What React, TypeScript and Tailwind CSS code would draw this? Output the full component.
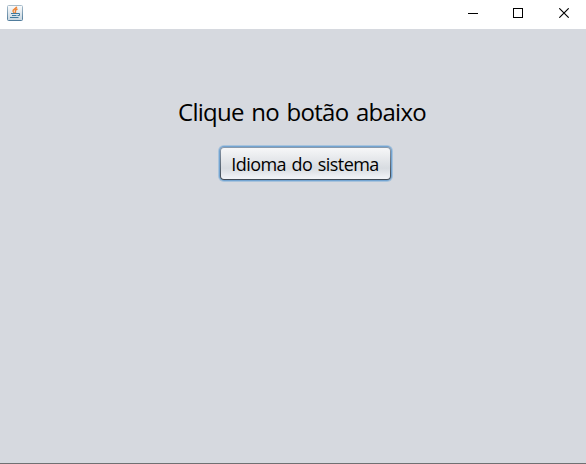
function JavaIcon() {
  return (
    <svg width="16" height="16" viewBox="0 0 16 16" className="block">
      <defs>
        <linearGradient id="tile" x1="0" y1="0" x2="0" y2="1">
          <stop offset="0" stopColor="#fbfcfd" />
          <stop offset="1" stopColor="#c9d6e0" />
        </linearGradient>
        <linearGradient id="edge" x1="0" y1="0" x2="0" y2="1">
          <stop offset="0" stopColor="#a9bdcb" />
          <stop offset="1" stopColor="#507c9c" />
        </linearGradient>
      </defs>
      <rect x="0.5" y="0.5" width="15" height="15" rx="1" fill="url(#tile)" stroke="url(#edge)" />
      <path d="M9.7 1.8C9.2 3.6 5.6 4.4 6 6.2C6.2 7 7 7.3 7 8M10.5 4C8.5 4.8 8 5.6 8.5 6.5C8.8 7.2 8.6 7.6 8 8" fill="none" stroke="#ee8435" strokeWidth="1.4" />
      <path d="M4 8.5H10M5 10.5H9.5M10 8.5H12.5V10.5H10.5M3 12.5H11.5" fill="none" stroke="#3f789e" strokeWidth="1" />
    </svg>
  );
}

function TitleBar() {
  return (
    <header className="flex h-[29px] shrink-0 items-start justify-between bg-white">
      <div className="pt-[5px] pl-[7px]">
        <JavaIcon />
      </div>
      <div className="flex">
        <button aria-label="Minimizar" className="flex h-[26px] w-[45px] items-center justify-center">
          <svg width="11" height="10" shapeRendering="crispEdges">
            <rect x="0" y="5" width="10" height="1" />
          </svg>
        </button>
        <button aria-label="Maximizar" className="flex h-[26px] w-[45px] items-center justify-center">
          <svg width="11" height="10" shapeRendering="crispEdges">
            <path d="M0.5 0.5H9.5V9.5H0.5Z" fill="none" stroke="#000" />
          </svg>
        </button>
        <button aria-label="Fechar" className="flex h-[26px] w-[45px] items-center justify-center pl-px">
          <svg width="11" height="10">
            <path d="M0.3 0.3L9.7 9.7M9.7 0.3L0.3 9.7" stroke="#000" strokeWidth="1.1" />
          </svg>
        </button>
      </div>
    </header>
  );
}

export default function App() {
  return (
    <div className="flex h-[464px] w-[586px] flex-col overflow-hidden bg-[#d6d9df] font-['Open_Sans',sans-serif] text-black">
      <TitleBar />
      <main className="flex flex-1 flex-col items-center border-b border-[#6f7072] pt-[67px] pl-[18px]">
        <h1 className="h-8 text-[24px] leading-8 tracking-[-0.72px] [word-spacing:2px] whitespace-nowrap">Clique no botão abaixo</h1>
        <div className="mt-[19px] ml-[6px] rounded-[4px] bg-linear-to-b from-[#8b9bad] to-[#3f4954] p-px shadow-[0_0_0_1px_#73a4d1,0_0_0_2px_#a8c3dc]">
          <button className="flex h-[31px] w-[169px] items-center justify-center rounded-[3px] bg-linear-to-b from-[#f6f7f8] via-[#d8dce1] via-65% to-[#f3f5f9] text-[18px] leading-6 tracking-[-0.54px] [word-spacing:1.3px] whitespace-nowrap">
            Idioma do sistema
          </button>
        </div>
      </main>
    </div>
  );
}
